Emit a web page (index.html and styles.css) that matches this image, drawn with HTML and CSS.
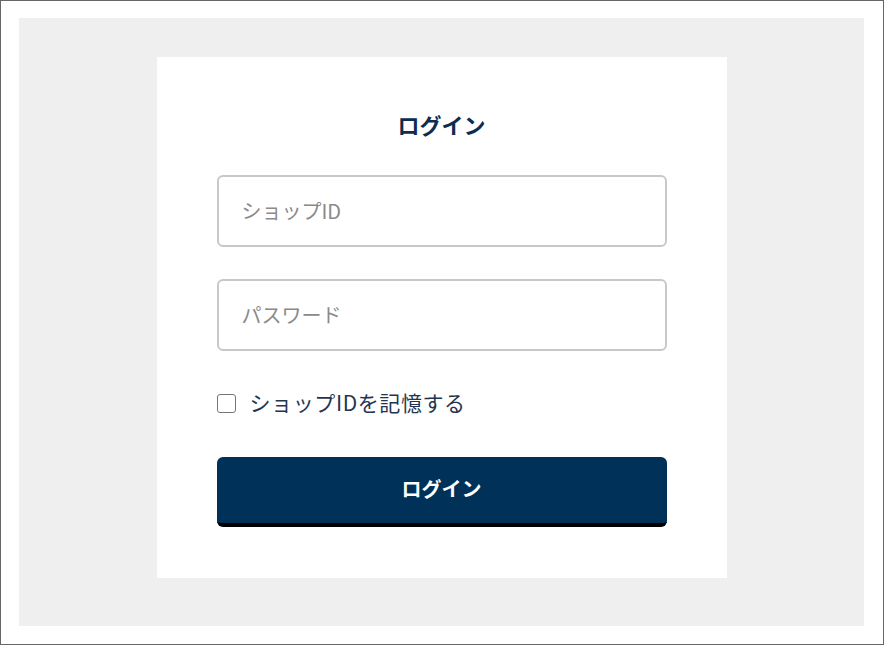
FILE: index.html
```html
<!DOCTYPE html>
<html lang="ja">
<head>
  <meta charset="UTF-8">
  <meta name="viewport" content="width=device-width, initial-scale=1.0">
  <title>ログイン</title>
  <link rel="stylesheet" href="styles.css">
</head>
<body>
  <div id="frame">
    <div id="wrap">
      <form id="login">
        <h1 class="title">ログイン</h1>
        <input class="field" type="text" placeholder="ショップID">
        <input class="field" type="password" placeholder="パスワード">
        <label class="remember">
          <input type="checkbox">
          <span>ショップIDを記憶する</span>
        </label>
        <button class="btn" type="button">ログイン</button>
      </form>
    </div>
  </div>
</body>
</html>
```

FILE: styles.css
```css
* {
  margin: 0;
  padding: 0;
  box-sizing: border-box;
}

body {
  font-family: "Noto Sans CJK JP", "Noto Sans", sans-serif;
  background: #fff;
}

#frame {
  width: 884px;
  height: 645px;
  border: 1px solid #666;
  padding: 17px 19px 18px 18px;
}

#wrap {
  height: 100%;
  background: #efefef;
  display: flex;
  justify-content: center;
  align-items: flex-start;
  padding-top: 39px;
}

#login {
  width: 570px;
  background: #fff;
  padding: 52px 60px 51px;
  display: flex;
  flex-direction: column;
}

.title {
  font-size: 22px;
  line-height: 30px;
  font-weight: bold;
  text-align: center;
  color: #0d2c4f;
  margin-bottom: 36px;
}

.field {
  height: 72px;
  border: 2px solid #c8c8c8;
  border-radius: 6px;
  padding: 0 23px 2px;
  font-family: inherit;
  font-size: 20px;
  color: #333;
  outline: none;
}

.field + .field {
  margin-top: 32px;
}

.field::placeholder {
  color: #8a8a8a;
}

.remember {
  display: flex;
  align-items: center;
  height: 30px;
  margin-top: 37px;
  margin-bottom: 1px;
  font-size: 21px;
  letter-spacing: 0.6px;
  color: #1f3550;
}

.remember span {
  line-height: 30px;
  padding-bottom: 3px;
}

.remember input {
  width: 19px;
  height: 19px;
  margin: 0 14px 0 0;
  appearance: none;
  border: 1px solid #767676;
  border-radius: 3px;
  background: #fff;
}

.btn {
  height: 70px;
  margin-top: 38px;
  padding-bottom: 3px;
  border: none;
  border-bottom: 4px solid #000;
  border-radius: 6px;
  background: #003259;
  color: #fff;
  font-family: inherit;
  font-size: 20px;
  font-weight: bold;
}
```
